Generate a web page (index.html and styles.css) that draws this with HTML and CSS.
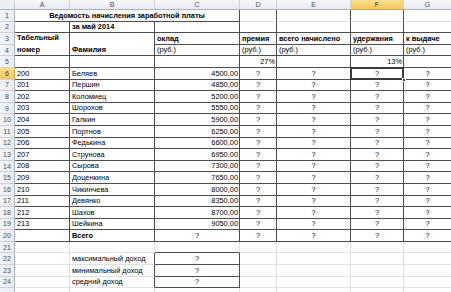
FILE: index.html
```html
<!DOCTYPE html>
<html lang="ru">
<head>
<meta charset="utf-8">
<title>Ведомость начисления заработной платы</title>
<link rel="stylesheet" href="styles.css">
</head>
<body>
<div class="sheet">
  <div class="h corner"></div><div class="h">A</div><div class="h">B</div><div class="h">C</div><div class="h">D</div><div class="h">E</div><div class="h sel">F</div><div class="h">G</div>

  <div class="rh">1</div><div class="c title bold ctr dr db">Ведомость начисления заработной платы</div><div class="c dr"></div><div class="c dr"></div><div class="c dr"></div><div class="c dr"></div>

  <div class="rh">2</div><div class="c d"></div><div class="c d bold">за май 2014</div><div class="c d"></div><div class="c d"></div><div class="c d"></div><div class="c d"></div><div class="c d"></div>

  <div class="rh">3</div><div class="c d bold tall wrap">Табельный номер</div><div class="c d bold tall">Фамилия</div><div class="c d bold">оклад</div><div class="c d bold">премия</div><div class="c d bold">всего начислено</div><div class="c d bold">удержания</div><div class="c d bold">к выдаче</div>

  <div class="rh">4</div><div class="c d">(руб.)</div><div class="c d">(руб.)</div><div class="c d">(руб.)</div><div class="c d">(руб.)</div><div class="c d">(руб.)</div>

  <div class="rh">5</div><div class="c d"></div><div class="c d"></div><div class="c d"></div><div class="c d rt">27%</div><div class="c d"></div><div class="c d rt">13%</div><div class="c d"></div>

  <div class="rh selr">6</div><div class="c d">200</div><div class="c d">Беляев</div><div class="c d rt">4500,00</div><div class="c d ctr">?</div><div class="c d ctr">?</div><div class="c d ctr act">?</div><div class="c d ctr">?</div>
  <div class="rh">7</div><div class="c d">201</div><div class="c d">Першин</div><div class="c d rt">4850,00</div><div class="c d ctr">?</div><div class="c d ctr">?</div><div class="c d ctr">?</div><div class="c d ctr">?</div>
  <div class="rh">8</div><div class="c d">202</div><div class="c d">Коломиец</div><div class="c d rt">5200,00</div><div class="c d ctr">?</div><div class="c d ctr">?</div><div class="c d ctr">?</div><div class="c d ctr">?</div>
  <div class="rh">9</div><div class="c d">203</div><div class="c d">Шорохов</div><div class="c d rt">5550,00</div><div class="c d ctr">?</div><div class="c d ctr">?</div><div class="c d ctr">?</div><div class="c d ctr">?</div>
  <div class="rh">10</div><div class="c d">204</div><div class="c d">Галкин</div><div class="c d rt">5900,00</div><div class="c d ctr">?</div><div class="c d ctr">?</div><div class="c d ctr">?</div><div class="c d ctr">?</div>
  <div class="rh">11</div><div class="c d">205</div><div class="c d">Портнов</div><div class="c d rt">6250,00</div><div class="c d ctr">?</div><div class="c d ctr">?</div><div class="c d ctr">?</div><div class="c d ctr">?</div>
  <div class="rh">12</div><div class="c d">206</div><div class="c d">Федькина</div><div class="c d rt">6600,00</div><div class="c d ctr">?</div><div class="c d ctr">?</div><div class="c d ctr">?</div><div class="c d ctr">?</div>
  <div class="rh">13</div><div class="c d">207</div><div class="c d">Струнова</div><div class="c d rt">6950,00</div><div class="c d ctr">?</div><div class="c d ctr">?</div><div class="c d ctr">?</div><div class="c d ctr">?</div>
  <div class="rh">14</div><div class="c d">208</div><div class="c d">Сырова</div><div class="c d rt">7300,00</div><div class="c d ctr">?</div><div class="c d ctr">?</div><div class="c d ctr">?</div><div class="c d ctr">?</div>
  <div class="rh">15</div><div class="c d">209</div><div class="c d">Доценкина</div><div class="c d rt">7650,00</div><div class="c d ctr">?</div><div class="c d ctr">?</div><div class="c d ctr">?</div><div class="c d ctr">?</div>
  <div class="rh">16</div><div class="c d">210</div><div class="c d">Чикинчева</div><div class="c d rt">8000,00</div><div class="c d ctr">?</div><div class="c d ctr">?</div><div class="c d ctr">?</div><div class="c d ctr">?</div>
  <div class="rh">17</div><div class="c d">211</div><div class="c d">Девянко</div><div class="c d rt">8350,00</div><div class="c d ctr">?</div><div class="c d ctr">?</div><div class="c d ctr">?</div><div class="c d ctr">?</div>
  <div class="rh">18</div><div class="c d">212</div><div class="c d">Шахов</div><div class="c d rt">8700,00</div><div class="c d ctr">?</div><div class="c d ctr">?</div><div class="c d ctr">?</div><div class="c d ctr">?</div>
  <div class="rh">19</div><div class="c d">213</div><div class="c d">Шейкина</div><div class="c d rt">9050,00</div><div class="c d ctr">?</div><div class="c d ctr">?</div><div class="c d ctr">?</div><div class="c d ctr">?</div>
  <div class="rh">20</div><div class="c d"></div><div class="c d bold">Всего</div><div class="c d ctr">?</div><div class="c d ctr">?</div><div class="c d ctr">?</div><div class="c d ctr">?</div><div class="c d ctr">?</div>

  <div class="rh">21</div><div class="c"></div><div class="c"></div><div class="c db"></div><div class="c"></div><div class="c"></div><div class="c"></div><div class="c"></div>

  <div class="rh">22</div><div class="c"></div><div class="c dr">максимальный доход</div><div class="c d ctr">?</div><div class="c"></div><div class="c"></div><div class="c"></div><div class="c"></div>
  <div class="rh">23</div><div class="c"></div><div class="c dr">минимальный доход</div><div class="c d ctr">?</div><div class="c"></div><div class="c"></div><div class="c"></div><div class="c"></div>
  <div class="rh">24</div><div class="c"></div><div class="c dr">средний доход</div><div class="c d ctr">?</div><div class="c"></div><div class="c"></div><div class="c"></div><div class="c"></div>
  <div class="rh"></div><div class="c"></div><div class="c"></div><div class="c"></div><div class="c"></div><div class="c"></div><div class="c"></div><div class="c"></div>
</div>
</body>
</html>
```
FILE: styles.css
```css
html, body {
  margin: 0;
  padding: 0;
  background: #ffffff;
  overflow: hidden;
}

.sheet {
  display: grid;
  grid-template-columns: 15px 55px 85px 85px 37px 74px 53px 48px;
  grid-template-rows: 10px;
  grid-auto-rows: 11.6px;
  width: 452px;
  font-family: "Liberation Sans", Arial, sans-serif;
  font-size: 7.4px;
  color: #000000;
}

.h, .rh {
  box-sizing: border-box;
  background: linear-gradient(#f7f8fa, #e6e9ee);
  color: #4a5260;
  font-size: 7px;
  display: flex;
  align-items: center;
  justify-content: center;
  border-right: 1px solid #cdd2d9;
  border-bottom: 1px solid #cdd2d9;
  line-height: 1;
}

.h {
  border-bottom-color: #aab2bd;
}

.rh {
  border-right-color: #aab2bd;
  background: linear-gradient(90deg, #f3f4f7, #e9ecf0);
}

.corner {
  background: #eceef2;
}

.sel, .selr {
  background: linear-gradient(#f9df8f, #f2c75c);
  color: #3a3a3a;
}

.sel {
  border-bottom-color: #e2a23a;
}

.selr {
  border-right-color: #e2a23a;
}

.c {
  box-sizing: border-box;
  border-right: 1px solid #dcdfe3;
  border-bottom: 1px solid #dcdfe3;
  padding: 0 2px 0 2px;
  line-height: 10px;
  display: flex;
  align-items: flex-end;
  white-space: nowrap;
  overflow: visible;
  min-width: 0;
}

.d {
  border-right-color: #4d4d4d;
  border-bottom-color: #4d4d4d;
}

.dr {
  border-right-color: #4d4d4d;
}

.db {
  border-bottom-color: #4d4d4d;
}

.title {
  grid-column: span 3;
}

.tall {
  grid-row: span 2;
}

.wrap {
  white-space: normal;
  line-height: 11.6px;
  padding-bottom: 0;
}

.bold {
  font-weight: bold;
}

.ctr {
  justify-content: center;
}

.rt {
  justify-content: flex-end;
  padding-right: 1px;
}

.act {
  position: relative;
}

.act::before {
  content: "";
  position: absolute;
  left: -1px;
  top: -1px;
  right: -1px;
  bottom: -1px;
  border: 2px solid #3a3a3a;
}

.act::after {
  content: "";
  position: absolute;
  right: -3px;
  bottom: -3px;
  width: 4px;
  height: 4px;
  background: #3a3a3a;
  border: 1px solid #ffffff;
  box-sizing: border-box;
}
```
